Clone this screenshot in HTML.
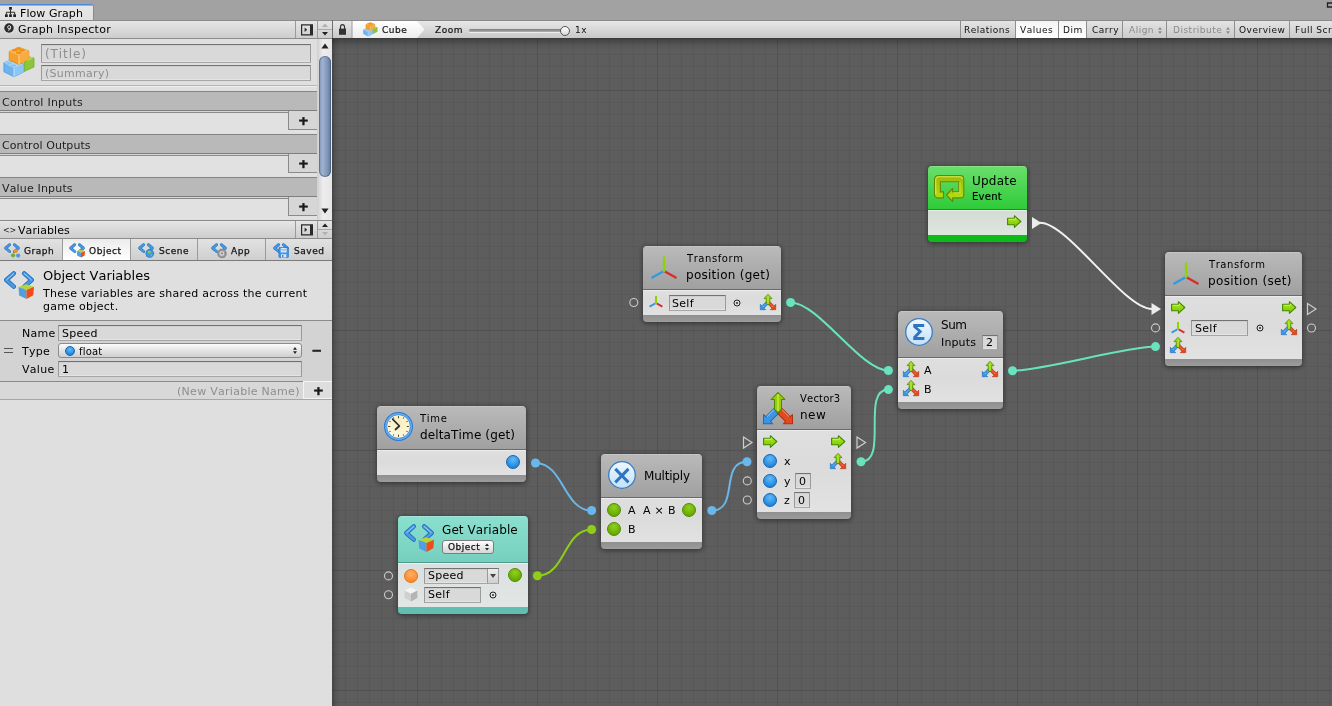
<!DOCTYPE html>
<html><head><meta charset="utf-8"><title>Flow Graph</title>
<style>
html,body{margin:0;padding:0}
body{width:1332px;height:706px;position:relative;overflow:hidden;background:#a2a2a2;font-family:"DejaVu Sans","Liberation Sans",sans-serif;font-size:11px;font-kerning:none}
.a{position:absolute}
.t{position:absolute;white-space:nowrap;line-height:14px;height:14px;will-change:transform}
.i{position:absolute;display:block;overflow:visible}
.g{will-change:transform}
.fld{position:absolute;box-sizing:border-box;background:#d9d9d9;border:1px solid #9a9a9a;border-top-color:#727272;border-bottom-color:#a6a6a6;box-shadow:inset 0 1px 0 #cecece,inset 0 -1px 0 #e4e4e4}
.hdr{position:absolute;background:linear-gradient(#e6e6e6,#cdcdcd);}
.node{position:absolute;border-radius:4px;box-shadow:0 1px 4px 1px rgba(0,0,0,.38);overflow:hidden}
.node .hd{position:absolute;left:0;right:0;top:0;box-sizing:border-box;border-bottom:1px solid #6a6a6a;background:linear-gradient(#bababa,#a0a0a0);box-shadow:inset 0 1px 0 rgba(255,255,255,.18)}
.node .bd{position:absolute;left:0;right:0;background:linear-gradient(#dfdfdf,#dbdbdb 45%,#e2e2e2);box-shadow:inset 0 1px 0 #ececec}
.node .ft{position:absolute;left:0;right:0;bottom:0;height:7px;background:linear-gradient(#8f8f8f,#9c9c9c)}
.node.green .hd{background:linear-gradient(#6ae06a,#2fca3a);border-bottom-color:#159020}
.node.green .bd{background:linear-gradient(#d3dbd3,#dfe6df);box-shadow:inset 0 1px 0 #e6efe6}
.node.green .ft{background:#0cba18}
.node.teal .hd{background:linear-gradient(#8be0ce,#76cfbe);border-bottom-color:#4e9c8e}
.node.teal .bd{background:linear-gradient(#dae0df,#e2e7e6);box-shadow:inset 0 1px 0 #eef4f3}
.node.teal .ft{background:#5fc0b1}
.btn{position:absolute;box-sizing:border-box;top:21px;height:17px;border-left:1px solid #8e8e8e;background:linear-gradient(#e4e4e4,#cacaca)}
.btn.on{background:linear-gradient(#f4f4f4,#ffffff)}
</style></head><body>

<div class="a" style="left:0;top:0;width:1332px;height:20px;background:#a2a2a2"></div>
<div class="a" style="left:0;top:4px;width:94px;height:17px;background:linear-gradient(#4a88dc 0,#4a88dc 1px,#8ab6ec 1px,#8ab6ec 2px,#e6e6e6 2px,#e1e1e1);border-right:1px solid #8a8a8a;border-radius:0 3px 0 0;box-sizing:border-box"></div>
<svg fill="none" class="i" style="left:5px;top:7px" width="11" height="10.5" viewBox="0 0 12 11" preserveAspectRatio="none"><path d="M4.5 0h3v3h-3z M0 7.5h3v3h-3z M4.5 7.5h3v3h-3z M9 7.5h3v3h-3z" fill="#222"/><path d="M6 3v4.5 M1.5 7.5v-2h9v2" stroke="#222" stroke-width="1"/></svg>
<span class="t" style="left:20.4px;top:7.00px;font-size:11px;letter-spacing:0.060px;color:#000;">Flow Graph</span>
<svg fill="none" class="i" style="left:1326px;top:2px" width="7" height="6" viewBox="0 0 7 6"><path d="M1.5 1 h6 v4 h-6z" stroke="#222" stroke-width="1.3"/></svg>
<div class="a" style="left:0;top:20px;width:332px;height:686px;background:#dfdfdf"></div>
<div class="a" style="left:0;top:20px;width:332px;height:1px;background:#8a8a8a"></div>
<div class="hdr" style="left:0;top:21px;width:332px;height:17px"></div>
<div class="a" style="left:0;top:38px;width:332px;height:1px;background:#8c8c8c"></div>
<svg fill="none" class="i" style="left:4px;top:23px" width="10" height="10" viewBox="0 0 11 11"><circle cx="5.5" cy="5.5" r="5.2" fill="#2a2a2a"/><circle cx="5.7" cy="4.6" r="1.7" stroke="#ddd" stroke-width="1.1"/><path d="M7.3 4.8 q0 3 -3 3.4" stroke="#ddd" stroke-width="1.1"/></svg>
<span class="t" style="left:18.4px;top:23.00px;font-size:11px;letter-spacing:0.303px;color:#000;">Graph Inspector</span>
<div class="a" style="left:295px;top:21px;width:1px;height:17px;background:#9a9a9a"></div><div class="a" style="left:317px;top:21px;width:1px;height:17px;background:#9a9a9a"></div><svg fill="none" class="i" style="left:301px;top:24px" width="12" height="12" viewBox="0 0 12 12"><path d="M.6 .8 h10.8 v10 h-10.8z" stroke="#2a2a2a" stroke-width="1.2"/><path d="M9 .8 h2.4 v10 h-2.4z" fill="#2a2a2a"/><path d="M3.6 3.6 L6.2 5.8 L3.6 8z" fill="#2a2a2a"/></svg>
<svg fill="none" class="i" style="left:321px;top:23px" width="8" height="14" viewBox="0 0 8 14"><path d="M4 .5 L7 4 L1 4Z" fill="#b0b0b0"/><path d="M1 9 L7 9 L4 12.5Z" fill="#222"/></svg>
<div class="a" style="left:318px;top:29px;width:14px;height:1px;background:#aaa"></div>
<svg fill="none" class="i" style="left:2.7px;top:46px" width="32.0" height="32.0" viewBox="3 46 32 32">
<path d="M24 60 L29 57 L34 58 L34 67 L24 71.6 Z" fill="#8ec63a" stroke="#6ea828" stroke-width=".7"/><path d="M24 60 L29 56.2 L34 57.8 L28 61 Z" fill="#a6d95a"/>
<path d="M3.9 62.8 L8.7 60.9 L23.7 64 L23.7 72 L14 76.8 L3.9 71.8 Z" fill="#6db3ee" stroke="#4a94dc" stroke-width=".7"/>
<path d="M3.9 62.8 L8.7 60.9 L23.7 64.5 L14 68.3 Z" fill="#a8d4f7"/>
<path d="M14 68.3 L23.7 64.5 L23.7 72 L14 76.8 Z" fill="#8cc6f4"/>
<path d="M14 68.3 L14 76.8" stroke="#d8ecfb" stroke-width=".8"/>
<path d="M9.2 51.5 L18.7 47.2 L28.8 50.9 L28.8 58.7 L19 64.6 L9.2 60 Z" fill="#f5a02c" stroke="#dc861a" stroke-width=".7"/>
<path d="M9.2 51.5 L18.7 47.2 L28.8 50.9 L19 55.6 Z" fill="#f9bb5e"/>
<path d="M19 55.6 L28.8 50.9 L28.8 58.7 L19 64.6 Z" fill="#f7ab40"/>
<path d="M19 55.6 L19 64.6" stroke="#fde0ae" stroke-width=".8"/>
<ellipse cx="15" cy="50.2" rx="3" ry="1.3" fill="#ef8f12"/><ellipse cx="22" cy="50.2" rx="3" ry="1.3" fill="#ef8f12"/><ellipse cx="18.8" cy="52.8" rx="3" ry="1.3" fill="#ef8f12"/><ellipse cx="18.6" cy="48.6" rx="2.6" ry="1.1" fill="#ef8f12"/>
<ellipse cx="9" cy="63.5" rx="2.6" ry="1.1" fill="#84bff0"/><ellipse cx="13.5" cy="65.5" rx="2.6" ry="1.1" fill="#84bff0"/>
</svg>
<div class="fld" style="left:41px;top:44px;width:270px;height:19px"></div>
<span class="t" style="left:44.5px;top:47.00px;font-size:12px;letter-spacing:0.9px;color:#8e8e8e;">(Title)</span>
<div class="fld" style="left:41px;top:65px;width:270px;height:16px"></div><span class="t" style="left:44.5px;top:67.00px;font-size:11px;letter-spacing:0.28px;color:#8e8e8e;">(Summary)</span>
<div class="a" style="left:0;top:85px;width:317px;height:1px;background:#b4b4b4"></div><div class="a" style="left:0;top:86px;width:317px;height:1px;background:#eee"></div>
<div class="a" style="left:0;top:91px;width:317px;height:1px;background:#858585"></div>
<div class="a" style="left:0;top:92px;width:317px;height:18px;background:#b9b9b9"></div>
<div class="a" style="left:0;top:110px;width:317px;height:1px;background:#7e7e7e"></div>
<div class="a" style="left:0;top:111px;width:317px;height:1px;background:#d6d6d6"></div>
<div class="a" style="left:0;top:112px;width:288px;height:1px;background:#8a8a8a"></div>
<div class="a" style="left:0;top:113px;width:317px;height:20px;background:#e1e1e1"></div>
<div class="a" style="left:288px;top:111px;width:29px;height:19px;box-sizing:border-box;background:#d6d6d6;border-left:1px solid #8a8a8a;border-bottom:1px solid #8a8a8a"></div>
<svg fill="none" class="i g" style="left:298.5px;top:116px" width="9" height="9" viewBox="0 0 9 9"><text x="-1.1" y="8.9" font-family="DejaVu Sans, sans-serif" font-weight="bold" font-size="13" fill="#1a1a1a" stroke="#1a1a1a" stroke-width=".55">+</text></svg>
<span class="t" style="left:1.5px;top:96.00px;font-size:11px;letter-spacing:0.237px;color:#222;">Control Inputs</span>
<div class="a" style="left:0;top:134px;width:317px;height:1px;background:#858585"></div>
<div class="a" style="left:0;top:135px;width:317px;height:18px;background:#b9b9b9"></div>
<div class="a" style="left:0;top:153px;width:317px;height:1px;background:#7e7e7e"></div>
<div class="a" style="left:0;top:154px;width:317px;height:1px;background:#d6d6d6"></div>
<div class="a" style="left:0;top:155px;width:288px;height:1px;background:#8a8a8a"></div>
<div class="a" style="left:0;top:156px;width:317px;height:20px;background:#e1e1e1"></div>
<div class="a" style="left:288px;top:154px;width:29px;height:19px;box-sizing:border-box;background:#d6d6d6;border-left:1px solid #8a8a8a;border-bottom:1px solid #8a8a8a"></div>
<svg fill="none" class="i g" style="left:298.5px;top:159px" width="9" height="9" viewBox="0 0 9 9"><text x="-1.1" y="8.9" font-family="DejaVu Sans, sans-serif" font-weight="bold" font-size="13" fill="#1a1a1a" stroke="#1a1a1a" stroke-width=".55">+</text></svg>
<span class="t" style="left:1.5px;top:139.00px;font-size:11px;letter-spacing:0.082px;color:#222;">Control Outputs</span>
<div class="a" style="left:0;top:177px;width:317px;height:1px;background:#858585"></div>
<div class="a" style="left:0;top:178px;width:317px;height:18px;background:#b9b9b9"></div>
<div class="a" style="left:0;top:196px;width:317px;height:1px;background:#7e7e7e"></div>
<div class="a" style="left:0;top:197px;width:317px;height:1px;background:#d6d6d6"></div>
<div class="a" style="left:0;top:198px;width:288px;height:1px;background:#8a8a8a"></div>
<div class="a" style="left:0;top:199px;width:317px;height:20px;background:#e1e1e1"></div>
<div class="a" style="left:288px;top:197px;width:29px;height:19px;box-sizing:border-box;background:#d6d6d6;border-left:1px solid #8a8a8a;border-bottom:1px solid #8a8a8a"></div>
<svg fill="none" class="i g" style="left:298.5px;top:202px" width="9" height="9" viewBox="0 0 9 9"><text x="-1.1" y="8.9" font-family="DejaVu Sans, sans-serif" font-weight="bold" font-size="13" fill="#1a1a1a" stroke="#1a1a1a" stroke-width=".55">+</text></svg>
<span class="t" style="left:1.5px;top:182.00px;font-size:11px;letter-spacing:0.165px;color:#222;">Value Inputs</span>
<div class="a" style="left:317px;top:39px;width:15px;height:182px;background:linear-gradient(90deg,#cfcfcf,#ededed 40%,#e6e6e6)"></div>
<svg fill="none" class="i" style="left:321px;top:43px" width="8" height="6" viewBox="0 0 8 6"><path d="M4 .5 L7.6 5.5 L.4 5.5Z" fill="#222"/></svg>
<svg fill="none" class="i" style="left:321px;top:208px" width="8" height="6" viewBox="0 0 8 6"><path d="M.4 .5 L7.6 .5 L4 5.5Z" fill="#222"/></svg>
<div class="a" style="left:318.6px;top:56px;width:12px;height:121px;border-radius:6px;background:linear-gradient(90deg,#7f95b6,#9fb2cf 30%,#8096b8 70%,#5f769b);box-shadow:inset 0 0 0 1px rgba(60,80,110,.5)"></div>
<div class="a" style="left:0;top:220px;width:332px;height:1px;background:#8a8a8a"></div>
<div class="hdr" style="left:0;top:221px;width:332px;height:17px"></div>
<div class="a" style="left:0;top:238px;width:332px;height:1px;background:#8c8c8c"></div>
<span class="t" style="left:2.5px;top:224.00px;font-size:8px;letter-spacing:-0.3px;color:#222;">&lt;&gt;</span>
<span class="t" style="left:18.4px;top:224.00px;font-size:11px;letter-spacing:0.084px;color:#000;">Variables</span>
<div class="a" style="left:295px;top:221px;width:1px;height:17px;background:#9a9a9a"></div><div class="a" style="left:317px;top:221px;width:1px;height:17px;background:#9a9a9a"></div><svg fill="none" class="i" style="left:301px;top:224px" width="12" height="12" viewBox="0 0 12 12"><path d="M.6 .8 h10.8 v10 h-10.8z" stroke="#2a2a2a" stroke-width="1.2"/><path d="M9 .8 h2.4 v10 h-2.4z" fill="#2a2a2a"/><path d="M3.6 3.6 L6.2 5.8 L3.6 8z" fill="#2a2a2a"/></svg>
<svg fill="none" class="i" style="left:321px;top:223px" width="8" height="14" viewBox="0 0 8 14"><path d="M4 .5 L7 4 L1 4Z" fill="#222"/><path d="M1 9 L7 9 L4 12.5Z" fill="#b0b0b0"/></svg>
<div class="a" style="left:318px;top:229px;width:14px;height:1px;background:#aaa"></div>
<div class="a" style="left:0;top:239px;width:332px;height:21px;background:linear-gradient(#e2e2e2,#cfcfcf)"></div>
<div class="a" style="left:62px;top:239px;width:68px;height:21px;background:linear-gradient(#ececec,#ffffff)"></div>
<div class="a" style="left:62px;top:239px;width:1px;height:21px;background:#9a9a9a"></div>
<div class="a" style="left:130px;top:239px;width:1px;height:21px;background:#9a9a9a"></div>
<div class="a" style="left:197px;top:239px;width:1px;height:21px;background:#9a9a9a"></div>
<div class="a" style="left:265px;top:239px;width:1px;height:21px;background:#9a9a9a"></div>
<div class="a" style="left:0;top:260px;width:332px;height:1px;background:#7a7a7a"></div>
<svg fill="none" class="i" style="left:4px;top:241.5px" width="16" height="16" viewBox="0 0 30 30" stroke-linejoin="round" stroke-linecap="round" fill="none">
<path d="M10.6 5 L3 11.4 L10.6 17.8" stroke="#1f6ab8" stroke-width="5.2"/><path d="M10.6 5 L3 11.4 L10.6 17.8" stroke="#4a9be6" stroke-width="3.4"/>
<path d="M19.4 5 L27 11.4 L19.4 17.8" stroke="#1f6ab8" stroke-width="5.2"/><path d="M19.4 5 L27 11.4 L19.4 17.8" stroke="#4a9be6" stroke-width="3.4"/>
<circle cx="22" cy="17" r="4" fill="#f0902a"/><circle cx="17" cy="25" r="4" fill="#6cb23a"/><circle cx="26.5" cy="25.5" r="4" fill="#4a9be6"/></svg>
<span class="t" style="left:23.7px;top:244.00px;font-size:9px;letter-spacing:0.55px;color:#111;-webkit-text-stroke:.25px #111;">Graph</span>
<svg fill="none" class="i" style="left:69px;top:241.5px" width="16" height="16" viewBox="0 0 30 30" stroke-linejoin="round" stroke-linecap="round" fill="none">
<path d="M10.6 5 L3 11.4 L10.6 17.8" stroke="#1f6ab8" stroke-width="5.2"/><path d="M10.6 5 L3 11.4 L10.6 17.8" stroke="#4a9be6" stroke-width="3.4"/>
<path d="M19.4 5 L27 11.4 L19.4 17.8" stroke="#1f6ab8" stroke-width="5.2"/><path d="M19.4 5 L27 11.4 L19.4 17.8" stroke="#4a9be6" stroke-width="3.4"/>
<path d="M14.5 17 L22 14.3 L30 16.8 L22.5 20 Z" fill="#b5d43a"/><path d="M14.5 17 L22.5 20 L22.5 29 L15.2 25.5 Z" fill="#4f9fe2"/><path d="M22.5 20 L30 16.8 L29.3 25.3 L22.5 29 Z" fill="#ee4d18"/></svg>
<span class="t" style="left:88.8px;top:244.00px;font-size:9px;letter-spacing:0.55px;color:#111;-webkit-text-stroke:.25px #111;">Object</span>
<svg fill="none" class="i" style="left:138px;top:241.5px" width="16" height="16" viewBox="0 0 30 30" stroke-linejoin="round" stroke-linecap="round" fill="none">
<path d="M10.6 5 L3 11.4 L10.6 17.8" stroke="#1f6ab8" stroke-width="5.2"/><path d="M10.6 5 L3 11.4 L10.6 17.8" stroke="#4a9be6" stroke-width="3.4"/>
<path d="M19.4 5 L27 11.4 L19.4 17.8" stroke="#1f6ab8" stroke-width="5.2"/><path d="M19.4 5 L27 11.4 L19.4 17.8" stroke="#4a9be6" stroke-width="3.4"/>
<circle cx="22" cy="21.5" r="7.5" fill="#3f97e6" stroke="#1f6ab8" stroke-width="1"/><path d="M18 18 q3 -3 6 -1 q1 3 -2 5 q-3 1 -4 -4z M24 24 q2 -1 3 1 q-1 2 -3 2z" fill="#7fcf3a"/></svg>
<span class="t" style="left:158.6px;top:244.00px;font-size:9px;letter-spacing:0.55px;color:#111;-webkit-text-stroke:.25px #111;">Scene</span>
<svg fill="none" class="i" style="left:211px;top:241.5px" width="16" height="16" viewBox="0 0 30 30" stroke-linejoin="round" stroke-linecap="round" fill="none">
<path d="M10.6 5 L3 11.4 L10.6 17.8" stroke="#1f6ab8" stroke-width="5.2"/><path d="M10.6 5 L3 11.4 L10.6 17.8" stroke="#4a9be6" stroke-width="3.4"/>
<path d="M19.4 5 L27 11.4 L19.4 17.8" stroke="#1f6ab8" stroke-width="5.2"/><path d="M19.4 5 L27 11.4 L19.4 17.8" stroke="#4a9be6" stroke-width="3.4"/>
<circle cx="20.6" cy="21.5" r="7" fill="none" stroke="#8e8e8e" stroke-width="4" stroke-dasharray="3 2.5"/><circle cx="20.6" cy="21.5" r="5.6" fill="#d4d4d4" stroke="#868686" stroke-width="1.2"/><circle cx="20.6" cy="21.5" r="2.1" fill="#8c8c8c"/></svg>
<span class="t" style="left:231px;top:244.00px;font-size:9px;letter-spacing:0.55px;color:#111;-webkit-text-stroke:.25px #111;">App</span>
<svg fill="none" class="i" style="left:273px;top:241.5px" width="16" height="16" viewBox="0 0 30 30" stroke-linejoin="round" stroke-linecap="round" fill="none">
<path d="M10.6 5 L3 11.4 L10.6 17.8" stroke="#1f6ab8" stroke-width="5.2"/><path d="M10.6 5 L3 11.4 L10.6 17.8" stroke="#4a9be6" stroke-width="3.4"/>
<path d="M19.4 5 L27 11.4 L19.4 17.8" stroke="#1f6ab8" stroke-width="5.2"/><path d="M19.4 5 L27 11.4 L19.4 17.8" stroke="#4a9be6" stroke-width="3.4"/>
<rect x="11" y="10.5" width="18" height="18.5" rx="1.5" fill="#3f97e6" stroke="#1f6ab8" stroke-width="1"/><rect x="14.5" y="11.5" width="11" height="8" fill="#eef5fc"/><path d="M16 14 h8 M16 16.5 h8" stroke="#6aa6dc" stroke-width="1.2"/><rect x="15" y="23" width="10" height="6" fill="#dbe6f0"/><rect x="17" y="24.5" width="2.5" height="3.5" fill="#3f6fa8"/></svg>
<span class="t" style="left:293.5px;top:244.00px;font-size:9px;letter-spacing:0.55px;color:#111;-webkit-text-stroke:.25px #111;">Saved</span>
<svg fill="none" class="i" style="left:4px;top:270px" width="30" height="30" viewBox="0 0 30 30" stroke-linejoin="round" stroke-linecap="round" fill="none">
<path d="M9.8 3.4 L2.3 10 L9.8 16.6" stroke="#1f6ab8" stroke-width="4.4"/><path d="M9.8 3.4 L2.3 10 L9.8 16.6" stroke="#4a9be6" stroke-width="2.8"/><path d="M9.6 3.6 L2.8 9.6" stroke="#a8d6fa" stroke-width="1" opacity=".9"/>
<path d="M20.2 3.4 L27.7 10 L20.2 16.6" stroke="#1f6ab8" stroke-width="4.4"/><path d="M20.2 3.4 L27.7 10 L20.2 16.6" stroke="#4a9be6" stroke-width="2.8"/><path d="M20.4 3.6 L27.2 9.6" stroke="#a8d6fa" stroke-width="1" opacity=".9"/>
<path d="M14.5 17 L22 14.3 L30 16.8 L22.5 20 Z" fill="#b5d43a"/><path d="M14.5 17 L22.5 20 L22.5 29 L15.2 25.5 Z" fill="#4f9fe2"/><path d="M22.5 20 L30 16.8 L29.3 25.3 L22.5 29 Z" fill="#ee4d18"/></svg>
<span class="t" style="left:43.3px;top:269.00px;font-size:13px;letter-spacing:0.007px;color:#000;">Object Variables</span>
<span class="t" style="left:43.3px;top:287.00px;font-size:11px;letter-spacing:0.239px;color:#000;">These variables are shared across the current</span>
<span class="t" style="left:43.3px;top:300.00px;font-size:11px;letter-spacing:0.28px;color:#000;">game object.</span>
<div class="a" style="left:0;top:320px;width:332px;height:1px;background:#8a8a8a"></div>
<div class="a" style="left:0;top:321px;width:332px;height:60px;background:#d3d3d3"></div>
<div class="a" style="left:0;top:381px;width:332px;height:1px;background:#8a8a8a"></div>
<div class="a" style="left:0;top:382px;width:332px;height:17px;background:#d8d8d8"></div>
<div class="a" style="left:0;top:399px;width:332px;height:1px;background:#a6a6a6"></div>
<div class="a" style="left:4px;top:348px;width:9px;height:1px;background:#555"></div><div class="a" style="left:4px;top:352px;width:9px;height:1px;background:#555"></div>
<span class="t" style="left:22.4px;top:327.00px;font-size:11px;letter-spacing:0.28px;color:#000;">Name</span>
<span class="t" style="left:22.4px;top:345.00px;font-size:11px;letter-spacing:0.28px;color:#000;">Type</span>
<span class="t" style="left:22.4px;top:363.00px;font-size:11px;letter-spacing:0.28px;color:#000;">Value</span>
<div class="fld" style="left:58px;top:325px;width:244px;height:16px"></div><span class="t" style="left:61.5px;top:327.00px;font-size:11px;letter-spacing:0.28px;color:#000;">Speed</span>
<div class="fld" style="left:58px;top:361px;width:244px;height:16px"></div><span class="t" style="left:61.5px;top:363.00px;font-size:11px;letter-spacing:0.28px;color:#000;">1</span>
<div class="a" style="left:58px;top:343px;width:244px;height:15px;box-sizing:border-box;border:1px solid #8c8c8c;border-radius:3px;background:linear-gradient(#fbfbfb,#dcdcdc 70%,#cfcfcf)"></div>
<div class="i" style="left:64.5px;top:345.5px;width:10px;height:10px;border-radius:50%;box-sizing:border-box;border:1px solid #1763b0;background:radial-gradient(circle at 50% 30%, #62bbf8 0%, #1f86dc 75%)"></div>
<span class="t" style="left:79px;top:345.00px;font-size:10px;letter-spacing:0.2px;color:#000;">float</span>
<svg fill="none" class="i" style="left:292.5px;top:347px" width="4" height="7" viewBox="0 0 5 9"><path d="M2.5 0 L5 3.4 L0 3.4Z M0 5.6 L5 5.6 L2.5 9Z" fill="#222"/></svg>
<svg fill="none" class="i g" style="left:313px;top:345.2px" width="8" height="10" viewBox="0 0 8 10"><text x="-1.6" y="9.6" font-family="DejaVu Sans, sans-serif" font-weight="bold" font-size="13" fill="#1a1a1a" stroke="#1a1a1a" stroke-width=".4">−</text></svg>
<span class="t" style="right:1032.5px;top:385.00px;font-size:11px;letter-spacing:0.28px;color:#8e8e8e;">(New Variable Name)</span>
<div class="a" style="left:303px;top:381px;width:29px;height:18px;box-sizing:border-box;background:#dedede;border-left:1px solid #f4f4f4;border-top:1px solid #f4f4f4;border-bottom:1px solid #f4f4f4"></div>
<svg fill="none" class="i g" style="left:314px;top:386px" width="9" height="9" viewBox="0 0 9 9"><text x="-1.1" y="8.9" font-family="DejaVu Sans, sans-serif" font-weight="bold" font-size="13" fill="#1a1a1a" stroke="#1a1a1a" stroke-width=".55">+</text></svg>
<div class="a" style="left:332px;top:38px;width:1000px;height:668px;background-color:#5d5d5d;background-image:
linear-gradient(90deg,rgba(0,0,0,.25) 0,rgba(0,0,0,.1) 3px,rgba(0,0,0,0) 8px),
linear-gradient(180deg,rgba(0,0,0,.36) 0,rgba(0,0,0,.2) 3px,rgba(0,0,0,.08) 7px,rgba(0,0,0,0) 12px),
linear-gradient(90deg,rgba(0,0,0,.07) 1px,transparent 1px),
linear-gradient(180deg,rgba(0,0,0,.07) 1px,transparent 1px),
linear-gradient(90deg,rgba(0,0,0,.06) 1px,transparent 1px),
linear-gradient(180deg,rgba(0,0,0,.06) 1px,transparent 1px);
background-size:100% 100%,100% 100%,120px 120px,120px 120px,12px 12px,12px 12px;
background-position:0 0,0 0,85px 52px,85px 52px,1px 4px,1px 4px;background-repeat:no-repeat,no-repeat,repeat,repeat,repeat,repeat"></div>
<div class="a" style="left:332px;top:20px;width:1000px;height:1px;background:#8a8a8a"></div>
<div class="hdr" style="left:332px;top:21px;width:1000px;height:17px;background:linear-gradient(#e8e8e8,#c8c8c8)"></div>
<div class="a" style="left:332px;top:20px;width:1px;height:18px;background:#6f6f6f"></div>
<svg fill="none" class="i" style="left:339px;top:24px" width="7" height="11" viewBox="0 0 8 11" preserveAspectRatio="none"><rect x="0" y="4.6" width="8" height="6.2" fill="#333"/><path d="M1.7 5 v-2 a2.3 2.3 0 0 1 4.6 0 v2" stroke="#333" stroke-width="1.3"/></svg>
<svg fill="none" class="i" style="left:352px;top:21px" width="73" height="17" viewBox="0 0 73 17"><defs><linearGradient id="bc" x1="0" y1="0" x2="0" y2="1"><stop offset="0" stop-color="#fff"/><stop offset="1" stop-color="#ececec"/></linearGradient></defs><path d="M0 0 L65 0 L72.5 8.5 L65 17 L0 17Z" fill="url(#bc)"/><path d="M0 0v17" stroke="#9a9a9a" stroke-width="1"/></svg>
<svg fill="none" class="i" style="left:363px;top:21.8px" width="14.72" height="14.72" viewBox="3 46 32 32">
<path d="M24 60 L29 57 L34 58 L34 67 L24 71.6 Z" fill="#8ec63a" stroke="#6ea828" stroke-width=".7"/><path d="M24 60 L29 56.2 L34 57.8 L28 61 Z" fill="#a6d95a"/>
<path d="M3.9 62.8 L8.7 60.9 L23.7 64 L23.7 72 L14 76.8 L3.9 71.8 Z" fill="#6db3ee" stroke="#4a94dc" stroke-width=".7"/>
<path d="M3.9 62.8 L8.7 60.9 L23.7 64.5 L14 68.3 Z" fill="#a8d4f7"/>
<path d="M14 68.3 L23.7 64.5 L23.7 72 L14 76.8 Z" fill="#8cc6f4"/>
<path d="M14 68.3 L14 76.8" stroke="#d8ecfb" stroke-width=".8"/>
<path d="M9.2 51.5 L18.7 47.2 L28.8 50.9 L28.8 58.7 L19 64.6 L9.2 60 Z" fill="#f5a02c" stroke="#dc861a" stroke-width=".7"/>
<path d="M9.2 51.5 L18.7 47.2 L28.8 50.9 L19 55.6 Z" fill="#f9bb5e"/>
<path d="M19 55.6 L28.8 50.9 L28.8 58.7 L19 64.6 Z" fill="#f7ab40"/>
<path d="M19 55.6 L19 64.6" stroke="#fde0ae" stroke-width=".8"/>
<ellipse cx="15" cy="50.2" rx="3" ry="1.3" fill="#ef8f12"/><ellipse cx="22" cy="50.2" rx="3" ry="1.3" fill="#ef8f12"/><ellipse cx="18.8" cy="52.8" rx="3" ry="1.3" fill="#ef8f12"/><ellipse cx="18.6" cy="48.6" rx="2.6" ry="1.1" fill="#ef8f12"/>
<ellipse cx="9" cy="63.5" rx="2.6" ry="1.1" fill="#84bff0"/><ellipse cx="13.5" cy="65.5" rx="2.6" ry="1.1" fill="#84bff0"/>
</svg>
<span class="t" style="left:381.7px;top:23.00px;font-size:9px;letter-spacing:0.5px;color:#111;-webkit-text-stroke:.2px #111;">Cube</span>
<span class="t" style="left:435.4px;top:23.00px;font-size:9px;letter-spacing:0.5px;color:#111;-webkit-text-stroke:.2px #111;">Zoom</span>
<div class="a" style="left:469px;top:29px;width:96px;height:3px;border-radius:2px;background:linear-gradient(#7c7c7c,#b0b0b0);box-shadow:0 1px 0 rgba(255,255,255,.6)"></div>
<div class="a" style="left:559.7px;top:25.5px;width:10px;height:10px;border-radius:50%;box-sizing:border-box;border:1px solid #555;background:linear-gradient(#fff,#d8d8d8)"></div>
<span class="t" style="left:575.3px;top:23.00px;font-size:9px;letter-spacing:0.5px;color:#111;">1x</span>
<div class="btn" style="left:960px;width:55px"></div>
<span class="t" style="left:964.3px;top:23.00px;font-size:9px;letter-spacing:0.5px;color:#111;">Relations</span>
<div class="btn on" style="left:1015px;width:43px"></div>
<span class="t" style="left:1019.5px;top:23.00px;font-size:9px;letter-spacing:0.5px;color:#111;">Values</span>
<div class="btn on" style="left:1058px;width:28px"></div>
<span class="t" style="left:1063px;top:23.00px;font-size:9px;letter-spacing:0.5px;color:#111;">Dim</span>
<div class="btn" style="left:1086px;width:36px"></div>
<span class="t" style="left:1091.5px;top:23.00px;font-size:9px;letter-spacing:0.5px;color:#111;">Carry</span>
<div class="btn" style="left:1122px;width:44px"></div>
<span class="t" style="left:1128.5px;top:23.00px;font-size:9px;letter-spacing:0.5px;color:#8a8a8a;">Align</span>
<div class="btn" style="left:1166px;width:68px"></div>
<span class="t" style="left:1172.5px;top:23.00px;font-size:9px;letter-spacing:0.5px;color:#8a8a8a;">Distribute</span>
<div class="btn" style="left:1234px;width:55px"></div>
<span class="t" style="left:1238.7px;top:23.00px;font-size:9px;letter-spacing:0.5px;color:#111;">Overview</span>
<div class="btn" style="left:1289px;width:51px"></div>
<span class="t" style="left:1294.8px;top:23.00px;font-size:9px;letter-spacing:0.5px;color:#111;">Full Screen</span>
<svg fill="none" class="i" style="left:1158.1px;top:26.5px" width="4" height="7" viewBox="0 0 5 9"><path d="M2.5 0 L5 3.4 L0 3.4Z M0 5.6 L5 5.6 L2.5 9Z" fill="#8a8a8a"/></svg>
<svg fill="none" class="i" style="left:1226.3px;top:26.5px" width="4" height="7" viewBox="0 0 5 9"><path d="M2.5 0 L5 3.4 L0 3.4Z M0 5.6 L5 5.6 L2.5 9Z" fill="#8a8a8a"/></svg>
<div class="a" style="left:332px;top:38px;width:1000px;height:1px;background:#3c3c3c"></div>
<svg fill="none" class="i" style="left:0;top:0" width="1332" height="706" viewBox="0 0 1332 706"><path d="M535.5 463 C563.5 463 563.6 510.5 591.6 510.5" fill="none" stroke="#6ab7ec" stroke-width="2"/><path d="M537.4 575.8 C565.4 575.8 563.6 529.5 591.6 529.5" fill="none" stroke="#8fce16" stroke-width="2"/><path d="M711.8 510.5 C739.8 510.5 719 461.8 747 461.8" fill="none" stroke="#6ab7ec" stroke-width="2"/><path d="M861 461.8 C889 461.8 860.4 389.6 888.4 389.6" fill="none" stroke="#68e3bd" stroke-width="2"/><path d="M790.6 302.5 C818.6 302.5 860.4 370.5 888.4 370.5" fill="none" stroke="#68e3bd" stroke-width="2"/><path d="M1012.5 370.7 C1041.5033170516754 370.7 1126.4966829483246 346.6 1155.5 346.6" fill="none" stroke="#68e3bd" stroke-width="2"/><path d="M1040 222.8 C1068.266191819911 222.8 1123.733808180089 309 1152 309" fill="none" stroke="#f2f2f2" stroke-width="2"/><circle cx="535.5" cy="463" r="4.5" fill="#6ab7ec"/><circle cx="591.6" cy="510.5" r="4.5" fill="#6ab7ec"/><circle cx="537.4" cy="575.8" r="4.5" fill="#8fce16"/><circle cx="591.6" cy="529.5" r="4.5" fill="#8fce16"/><circle cx="711.8" cy="510.5" r="4.5" fill="#6ab7ec"/><circle cx="747" cy="461.8" r="4.5" fill="#6ab7ec"/><circle cx="861" cy="461.8" r="4.5" fill="#68e3bd"/><circle cx="888.4" cy="389.6" r="4.5" fill="#68e3bd"/><circle cx="790.6" cy="302.5" r="4.5" fill="#68e3bd"/><circle cx="888.4" cy="370.5" r="4.5" fill="#68e3bd"/><circle cx="1012.5" cy="370.7" r="4.5" fill="#68e3bd"/><circle cx="1155.5" cy="346.6" r="4.5" fill="#68e3bd"/><circle cx="633.8" cy="302.5" r="4" fill="none" stroke="#cbcbcb" stroke-width="1.1"/><circle cx="388.5" cy="575.9" r="4" fill="none" stroke="#cbcbcb" stroke-width="1.1"/><circle cx="388.5" cy="594.8" r="4" fill="none" stroke="#cbcbcb" stroke-width="1.1"/><circle cx="747.3" cy="480.9" r="4" fill="none" stroke="#cbcbcb" stroke-width="1.1"/><circle cx="747.3" cy="500" r="4" fill="none" stroke="#cbcbcb" stroke-width="1.1"/><circle cx="1155.5" cy="327.9" r="4" fill="none" stroke="#cbcbcb" stroke-width="1.1"/><circle cx="1311.5" cy="328" r="4" fill="none" stroke="#cbcbcb" stroke-width="1.1"/><path d="M1032 217 L1041.5 223 L1032 229 Z" fill="#ececec"/><path d="M1151.5 303 L1161.0 309 L1151.5 315 Z" fill="#ececec"/><path d="M743.5 437.1 L752 442.6 L743.5 448.1 Z" fill="none" stroke="#cdcdcd" stroke-width="1.2"/><path d="M857.0 437.1 L865.5 442.6 L857.0 448.1 Z" fill="none" stroke="#cdcdcd" stroke-width="1.2"/><path d="M1307.5 303.5 L1316 309 L1307.5 314.5 Z" fill="none" stroke="#cdcdcd" stroke-width="1.2"/></svg>
<div class="node grey" style="left:643px;top:246px;width:138px;height:76px"><div class="hd" style="height:44px"></div><div class="bd" style="top:44px;height:25px"></div><div class="ft"></div></div>
<svg fill="none" class="i" style="left:647.8px;top:252.60000000000002px" width="32" height="32" viewBox="0 0 32 32" stroke-linecap="butt">
<path d="M16 18 L3.5 25.0" stroke="#2f9be0" stroke-width="2.3"/>
<path d="M16 18 L28.5 25.0" stroke="#dc2a2a" stroke-width="2.3"/>
<path d="M16 19.15 L16 3.5" stroke="#8fd400" stroke-width="2.3"/>
</svg>
<span class="t" style="left:686.6px;top:252.00px;font-size:10px;letter-spacing:0.564px;color:#000;">Transform</span>
<span class="t" style="left:686.4px;top:268.00px;font-size:12px;letter-spacing:0.268px;color:#000;">position (get)</span>
<svg fill="none" class="i" style="left:640px;top:285px" width="32" height="32" viewBox="0 0 32 32" stroke-linecap="butt">
<path d="M16 18 L9.6 21.7" stroke="#2f9be0" stroke-width="2.0"/>
<path d="M16 18 L22.4 21.7" stroke="#dc2a2a" stroke-width="2.0"/>
<path d="M16 19.00 L16 11.1" stroke="#8fd400" stroke-width="2.0"/>
</svg>
<div class="fld" style="left:668.5px;top:295px;width:57px;height:16px"></div><span class="t" style="left:672.0px;top:297.00px;font-size:11px;letter-spacing:0.28px;color:#000;">Self</span>
<svg fill="none" class="i" style="left:732px;top:297.5px" width="10" height="10" viewBox="0 0 10 10"><circle cx="5" cy="5" r="3" fill="none" stroke="#222" stroke-width="1"/><circle cx="5" cy="5" r="0.9" fill="#222"/></svg>
<svg fill="none" class="i" style="left:760px;top:293.5px" width="16" height="16" viewBox="0 0 16 16" stroke-linejoin="round">
<path d="M7.4 6.4 L1.87 11.87 L0.3 10.3 L0.3 15.7 L5.7 15.7 L4.13 14.13 L9.6 8.6 Z" fill="#3a95e4" stroke="#1c6ab8" stroke-width=".6"/>
<path d="M8.6 6.4 L14.13 11.87 L15.7 10.3 L15.7 15.7 L10.3 15.7 L11.87 14.13 L6.4 8.6 Z" fill="#e2491e" stroke="#b03010" stroke-width=".6"/>
<path d="M6.6 9.2 L2.6 13.2" stroke="#b5dcfa" stroke-width=".8" stroke-dasharray="1 1"/><path d="M9.4 9.2 L13.4 13.2" stroke="#f7b9a4" stroke-width=".8" stroke-dasharray="1 1"/>
<path d="M8 0.3 L12 4.6 L9.8 4.6 L9.8 9.2 L8 11 L6.2 9.2 L6.2 4.6 L4 4.6 Z" fill="#93cc08" stroke="#3f8a00" stroke-width=".7"/>
<path d="M8 1.6 L8 9.6" stroke="#c9ee55" stroke-width="1.1" opacity=".9"/>
</svg>
<div class="node green" style="left:928px;top:166px;width:99px;height:76px"><div class="hd" style="height:44px"></div><div class="bd" style="top:44px;height:25px"></div><div class="ft"></div></div>
<svg fill="none" class="i" style="left:934px;top:175px" width="30.4" height="27" viewBox="-0.5 -0.5 31 27" preserveAspectRatio="none" stroke-linejoin="round">
<defs><linearGradient id="upg" x1="0" y1="0" x2="0" y2="1"><stop offset="0" stop-color="#9cb804"/><stop offset=".45" stop-color="#a8cc0a"/><stop offset="1" stop-color="#b2e412"/></linearGradient></defs>
<path d="M3.5 0 H26.4 a3.5 3.5 0 0 1 3.5 3.5 V18.9 a3.5 3.5 0 0 1 -3.5 3.5 H18.5 V26 L12.3 19.5 L18.5 13 V16.4 H24.8 V6.2 H6 V16.4 H9.2 V22.4 H3.5 a3.5 3.5 0 0 1 -3.5 -3.5 V3.5 a3.5 3.5 0 0 1 3.5 -3.5 Z" fill="url(#upg)" stroke="#6a8600" stroke-width="1.1"/>
<path d="M1.3 18.5 V3.8 a2.5 2.5 0 0 1 2.5 -2.5 H26 a2.6 2.6 0 0 1 2.6 2.6" stroke="#dff06a" stroke-width="1" opacity=".9"/>
<path d="M25.9 6.6 V17.3 H19.3" stroke="#dff06a" stroke-width="1" opacity=".7"/>
</svg>
<span class="t" style="left:971.6px;top:174.00px;font-size:12px;letter-spacing:0.226px;color:#000;">Update</span>
<span class="t" style="left:971.6px;top:190.00px;font-size:10px;letter-spacing:0.261px;color:#000;-webkit-text-stroke:.2px #000;">Event</span>
<svg fill="none" class="i" style="left:1007px;top:215px" width="14.4" height="13" viewBox="0 0 14.4 13">
<defs><linearGradient id="fg1" x1="0" y1="0" x2="0" y2="1"><stop offset="0" stop-color="#b2ea26"/><stop offset="1" stop-color="#7cc400"/></linearGradient></defs>
<path d="M0.6 3.2 L7.4 3.2 L7.4 0.7 L13.8 6.5 L7.4 12.3 L7.4 9.8 L0.6 9.8 Z" fill="url(#fg1)" stroke="#3f8a00" stroke-width="1.1" stroke-linejoin="round"/>
<path d="M1.6 4.3 L8.3 4.3 L8.3 2.8" stroke="#dcf47a" stroke-width="0.9" opacity=".85"/>
</svg>
<div class="node grey" style="left:1165px;top:252px;width:137px;height:114px"><div class="hd" style="height:44px"></div><div class="bd" style="top:44px;height:63px"></div><div class="ft"></div></div>
<svg fill="none" class="i" style="left:1170px;top:259.2px" width="32" height="32" viewBox="0 0 32 32" stroke-linecap="butt">
<path d="M16 18 L3.5 25.0" stroke="#2f9be0" stroke-width="2.3"/>
<path d="M16 18 L28.5 25.0" stroke="#dc2a2a" stroke-width="2.3"/>
<path d="M16 19.15 L16 3.5" stroke="#8fd400" stroke-width="2.3"/>
</svg>
<span class="t" style="left:1208.6px;top:258.00px;font-size:10px;letter-spacing:0.564px;color:#000;">Transform</span>
<span class="t" style="left:1208.4px;top:274.00px;font-size:12px;letter-spacing:0.341px;color:#000;">position (set)</span>
<svg fill="none" class="i" style="left:1171px;top:301px" width="14.4" height="13" viewBox="0 0 14.4 13">
<defs><linearGradient id="fg2" x1="0" y1="0" x2="0" y2="1"><stop offset="0" stop-color="#b2ea26"/><stop offset="1" stop-color="#7cc400"/></linearGradient></defs>
<path d="M0.6 3.2 L7.4 3.2 L7.4 0.7 L13.8 6.5 L7.4 12.3 L7.4 9.8 L0.6 9.8 Z" fill="url(#fg2)" stroke="#3f8a00" stroke-width="1.1" stroke-linejoin="round"/>
<path d="M1.6 4.3 L8.3 4.3 L8.3 2.8" stroke="#dcf47a" stroke-width="0.9" opacity=".85"/>
</svg>
<svg fill="none" class="i" style="left:1282px;top:301px" width="14.4" height="13" viewBox="0 0 14.4 13">
<defs><linearGradient id="fg3" x1="0" y1="0" x2="0" y2="1"><stop offset="0" stop-color="#b2ea26"/><stop offset="1" stop-color="#7cc400"/></linearGradient></defs>
<path d="M0.6 3.2 L7.4 3.2 L7.4 0.7 L13.8 6.5 L7.4 12.3 L7.4 9.8 L0.6 9.8 Z" fill="url(#fg3)" stroke="#3f8a00" stroke-width="1.1" stroke-linejoin="round"/>
<path d="M1.6 4.3 L8.3 4.3 L8.3 2.8" stroke="#dcf47a" stroke-width="0.9" opacity=".85"/>
</svg>
<svg fill="none" class="i" style="left:1162px;top:310.9px" width="32" height="32" viewBox="0 0 32 32" stroke-linecap="butt">
<path d="M16 18 L9.6 21.7" stroke="#2f9be0" stroke-width="2.0"/>
<path d="M16 18 L22.4 21.7" stroke="#dc2a2a" stroke-width="2.0"/>
<path d="M16 19.00 L16 11.1" stroke="#8fd400" stroke-width="2.0"/>
</svg>
<div class="fld" style="left:1191px;top:320px;width:57px;height:16px"></div><span class="t" style="left:1194.5px;top:322.00px;font-size:11px;letter-spacing:0.28px;color:#000;">Self</span>
<svg fill="none" class="i" style="left:1254.5px;top:322.9px" width="10" height="10" viewBox="0 0 10 10"><circle cx="5" cy="5" r="3" fill="none" stroke="#222" stroke-width="1"/><circle cx="5" cy="5" r="0.9" fill="#222"/></svg>
<svg fill="none" class="i" style="left:1281px;top:318.5px" width="16" height="16" viewBox="0 0 16 16" stroke-linejoin="round">
<path d="M7.4 6.4 L1.87 11.87 L0.3 10.3 L0.3 15.7 L5.7 15.7 L4.13 14.13 L9.6 8.6 Z" fill="#3a95e4" stroke="#1c6ab8" stroke-width=".6"/>
<path d="M8.6 6.4 L14.13 11.87 L15.7 10.3 L15.7 15.7 L10.3 15.7 L11.87 14.13 L6.4 8.6 Z" fill="#e2491e" stroke="#b03010" stroke-width=".6"/>
<path d="M6.6 9.2 L2.6 13.2" stroke="#b5dcfa" stroke-width=".8" stroke-dasharray="1 1"/><path d="M9.4 9.2 L13.4 13.2" stroke="#f7b9a4" stroke-width=".8" stroke-dasharray="1 1"/>
<path d="M8 0.3 L12 4.6 L9.8 4.6 L9.8 9.2 L8 11 L6.2 9.2 L6.2 4.6 L4 4.6 Z" fill="#93cc08" stroke="#3f8a00" stroke-width=".7"/>
<path d="M8 1.6 L8 9.6" stroke="#c9ee55" stroke-width="1.1" opacity=".9"/>
</svg>
<svg fill="none" class="i" style="left:1169.8px;top:337px" width="16" height="16" viewBox="0 0 16 16" stroke-linejoin="round">
<path d="M7.4 6.4 L1.87 11.87 L0.3 10.3 L0.3 15.7 L5.7 15.7 L4.13 14.13 L9.6 8.6 Z" fill="#3a95e4" stroke="#1c6ab8" stroke-width=".6"/>
<path d="M8.6 6.4 L14.13 11.87 L15.7 10.3 L15.7 15.7 L10.3 15.7 L11.87 14.13 L6.4 8.6 Z" fill="#e2491e" stroke="#b03010" stroke-width=".6"/>
<path d="M6.6 9.2 L2.6 13.2" stroke="#b5dcfa" stroke-width=".8" stroke-dasharray="1 1"/><path d="M9.4 9.2 L13.4 13.2" stroke="#f7b9a4" stroke-width=".8" stroke-dasharray="1 1"/>
<path d="M8 0.3 L12 4.6 L9.8 4.6 L9.8 9.2 L8 11 L6.2 9.2 L6.2 4.6 L4 4.6 Z" fill="#93cc08" stroke="#3f8a00" stroke-width=".7"/>
<path d="M8 1.6 L8 9.6" stroke="#c9ee55" stroke-width="1.1" opacity=".9"/>
</svg>
<div class="node grey" style="left:898px;top:311px;width:105px;height:98px"><div class="hd" style="height:47px"></div><div class="bd" style="top:47px;height:44px"></div><div class="ft"></div></div>
<svg fill="none" class="i" style="left:905px;top:318px" width="28" height="28" viewBox="0 0 28 28">
<defs><linearGradient id="cg919" x1="0" y1="0" x2="0" y2="1"><stop offset="0" stop-color="#eef8ff"/><stop offset="1" stop-color="#c4e0f8"/></linearGradient></defs>
<circle cx="14" cy="14" r="13.3" fill="url(#cg919)" stroke="#3a7cc2" stroke-width="1.3"/><text x="6.3" y="21.9" font-family="DejaVu Sans, sans-serif" font-weight="bold" font-size="21.5" fill="#2f74c0">Σ</text></svg>
<span class="t" style="left:941.4px;top:318.00px;font-size:12px;letter-spacing:-0.461px;color:#000;">Sum</span>
<span class="t" style="left:941.4px;top:336.00px;font-size:11px;letter-spacing:0.136px;color:#000;">Inputs</span>
<div class="fld" style="left:982px;top:334.5px;width:15.5px;height:15px"></div><span class="t" style="left:985.5px;top:336.00px;font-size:11px;letter-spacing:0.28px;color:#000;">2</span>
<svg fill="none" class="i" style="left:902.8px;top:361px" width="16" height="16" viewBox="0 0 16 16" stroke-linejoin="round">
<path d="M7.4 6.4 L1.87 11.87 L0.3 10.3 L0.3 15.7 L5.7 15.7 L4.13 14.13 L9.6 8.6 Z" fill="#3a95e4" stroke="#1c6ab8" stroke-width=".6"/>
<path d="M8.6 6.4 L14.13 11.87 L15.7 10.3 L15.7 15.7 L10.3 15.7 L11.87 14.13 L6.4 8.6 Z" fill="#e2491e" stroke="#b03010" stroke-width=".6"/>
<path d="M6.6 9.2 L2.6 13.2" stroke="#b5dcfa" stroke-width=".8" stroke-dasharray="1 1"/><path d="M9.4 9.2 L13.4 13.2" stroke="#f7b9a4" stroke-width=".8" stroke-dasharray="1 1"/>
<path d="M8 0.3 L12 4.6 L9.8 4.6 L9.8 9.2 L8 11 L6.2 9.2 L6.2 4.6 L4 4.6 Z" fill="#93cc08" stroke="#3f8a00" stroke-width=".7"/>
<path d="M8 1.6 L8 9.6" stroke="#c9ee55" stroke-width="1.1" opacity=".9"/>
</svg>
<span class="t" style="left:924.4px;top:364.00px;font-size:11px;letter-spacing:0.28px;color:#000;">A</span>
<svg fill="none" class="i" style="left:982px;top:361px" width="16" height="16" viewBox="0 0 16 16" stroke-linejoin="round">
<path d="M7.4 6.4 L1.87 11.87 L0.3 10.3 L0.3 15.7 L5.7 15.7 L4.13 14.13 L9.6 8.6 Z" fill="#3a95e4" stroke="#1c6ab8" stroke-width=".6"/>
<path d="M8.6 6.4 L14.13 11.87 L15.7 10.3 L15.7 15.7 L10.3 15.7 L11.87 14.13 L6.4 8.6 Z" fill="#e2491e" stroke="#b03010" stroke-width=".6"/>
<path d="M6.6 9.2 L2.6 13.2" stroke="#b5dcfa" stroke-width=".8" stroke-dasharray="1 1"/><path d="M9.4 9.2 L13.4 13.2" stroke="#f7b9a4" stroke-width=".8" stroke-dasharray="1 1"/>
<path d="M8 0.3 L12 4.6 L9.8 4.6 L9.8 9.2 L8 11 L6.2 9.2 L6.2 4.6 L4 4.6 Z" fill="#93cc08" stroke="#3f8a00" stroke-width=".7"/>
<path d="M8 1.6 L8 9.6" stroke="#c9ee55" stroke-width="1.1" opacity=".9"/>
</svg>
<svg fill="none" class="i" style="left:902.8px;top:380px" width="16" height="16" viewBox="0 0 16 16" stroke-linejoin="round">
<path d="M7.4 6.4 L1.87 11.87 L0.3 10.3 L0.3 15.7 L5.7 15.7 L4.13 14.13 L9.6 8.6 Z" fill="#3a95e4" stroke="#1c6ab8" stroke-width=".6"/>
<path d="M8.6 6.4 L14.13 11.87 L15.7 10.3 L15.7 15.7 L10.3 15.7 L11.87 14.13 L6.4 8.6 Z" fill="#e2491e" stroke="#b03010" stroke-width=".6"/>
<path d="M6.6 9.2 L2.6 13.2" stroke="#b5dcfa" stroke-width=".8" stroke-dasharray="1 1"/><path d="M9.4 9.2 L13.4 13.2" stroke="#f7b9a4" stroke-width=".8" stroke-dasharray="1 1"/>
<path d="M8 0.3 L12 4.6 L9.8 4.6 L9.8 9.2 L8 11 L6.2 9.2 L6.2 4.6 L4 4.6 Z" fill="#93cc08" stroke="#3f8a00" stroke-width=".7"/>
<path d="M8 1.6 L8 9.6" stroke="#c9ee55" stroke-width="1.1" opacity=".9"/>
</svg>
<span class="t" style="left:924.4px;top:383.00px;font-size:11px;letter-spacing:0.28px;color:#000;">B</span>
<div class="node grey" style="left:757px;top:386px;width:94px;height:133px"><div class="hd" style="height:44px"></div><div class="bd" style="top:44px;height:82px"></div><div class="ft"></div></div>
<svg fill="none" class="i" style="left:763px;top:392px" width="30" height="32.28" viewBox="-0.5 -0.5 30 32.2" preserveAspectRatio="none" stroke-linejoin="round">
<path d="M10.6 15.9 L2.4 24.1 L0 22.1 L0 31.2 L9 31.2 L7 28.8 L14.5 21.3 Z" fill="#3a95e4" stroke="#1c6ab8" stroke-width="1"/>
<path d="M18.4 15.9 L26.6 24.1 L29 22.1 L29 31.2 L20 31.2 L22 28.8 L14.5 21.3 Z" fill="#e2491e" stroke="#b03010" stroke-width="1"/>
<path d="M11.2 16.4 L3.6 24" stroke="#9fd0f8" stroke-width="1" opacity=".8"/><path d="M17.8 16.4 L25.4 24" stroke="#f6a58a" stroke-width="1" opacity=".7"/>
<path d="M14.5 0 L21.5 7 L18 7 L18 16.8 L14.5 20.3 L11 16.8 L11 7 L7.5 7 Z" fill="#97cc06" stroke="#4a8a00" stroke-width="1"/>
<path d="M14.5 1.6 L14.5 18.5" stroke="#c6ea4a" stroke-width="1.6" opacity=".9"/>
</svg>
<span class="t" style="left:800.3px;top:392.00px;font-size:10px;letter-spacing:0.197px;color:#000;">Vector3</span>
<span class="t" style="left:800.3px;top:408.00px;font-size:12px;letter-spacing:0.444px;color:#000;">new</span>
<svg fill="none" class="i" style="left:763px;top:435px" width="14.4" height="13" viewBox="0 0 14.4 13">
<defs><linearGradient id="fg4" x1="0" y1="0" x2="0" y2="1"><stop offset="0" stop-color="#b2ea26"/><stop offset="1" stop-color="#7cc400"/></linearGradient></defs>
<path d="M0.6 3.2 L7.4 3.2 L7.4 0.7 L13.8 6.5 L7.4 12.3 L7.4 9.8 L0.6 9.8 Z" fill="url(#fg4)" stroke="#3f8a00" stroke-width="1.1" stroke-linejoin="round"/>
<path d="M1.6 4.3 L8.3 4.3 L8.3 2.8" stroke="#dcf47a" stroke-width="0.9" opacity=".85"/>
</svg>
<svg fill="none" class="i" style="left:831px;top:435px" width="14.4" height="13" viewBox="0 0 14.4 13">
<defs><linearGradient id="fg5" x1="0" y1="0" x2="0" y2="1"><stop offset="0" stop-color="#b2ea26"/><stop offset="1" stop-color="#7cc400"/></linearGradient></defs>
<path d="M0.6 3.2 L7.4 3.2 L7.4 0.7 L13.8 6.5 L7.4 12.3 L7.4 9.8 L0.6 9.8 Z" fill="url(#fg5)" stroke="#3f8a00" stroke-width="1.1" stroke-linejoin="round"/>
<path d="M1.6 4.3 L8.3 4.3 L8.3 2.8" stroke="#dcf47a" stroke-width="0.9" opacity=".85"/>
</svg>
<div class="i" style="left:763.0px;top:454.3px;width:14px;height:14px;border-radius:50%;box-sizing:border-box;border:1px solid #1763b0;background:radial-gradient(circle at 50% 30%, #62bbf8 0%, #1f86dc 75%)"></div>
<span class="t" style="left:783.8px;top:455.00px;font-size:11px;letter-spacing:0.28px;color:#000;">x</span>
<svg fill="none" class="i" style="left:830px;top:452.5px" width="16" height="16" viewBox="0 0 16 16" stroke-linejoin="round">
<path d="M7.4 6.4 L1.87 11.87 L0.3 10.3 L0.3 15.7 L5.7 15.7 L4.13 14.13 L9.6 8.6 Z" fill="#3a95e4" stroke="#1c6ab8" stroke-width=".6"/>
<path d="M8.6 6.4 L14.13 11.87 L15.7 10.3 L15.7 15.7 L10.3 15.7 L11.87 14.13 L6.4 8.6 Z" fill="#e2491e" stroke="#b03010" stroke-width=".6"/>
<path d="M6.6 9.2 L2.6 13.2" stroke="#b5dcfa" stroke-width=".8" stroke-dasharray="1 1"/><path d="M9.4 9.2 L13.4 13.2" stroke="#f7b9a4" stroke-width=".8" stroke-dasharray="1 1"/>
<path d="M8 0.3 L12 4.6 L9.8 4.6 L9.8 9.2 L8 11 L6.2 9.2 L6.2 4.6 L4 4.6 Z" fill="#93cc08" stroke="#3f8a00" stroke-width=".7"/>
<path d="M8 1.6 L8 9.6" stroke="#c9ee55" stroke-width="1.1" opacity=".9"/>
</svg>
<div class="i" style="left:763.0px;top:473.6px;width:14px;height:14px;border-radius:50%;box-sizing:border-box;border:1px solid #1763b0;background:radial-gradient(circle at 50% 30%, #62bbf8 0%, #1f86dc 75%)"></div>
<span class="t" style="left:783.8px;top:475.00px;font-size:11px;letter-spacing:0.28px;color:#000;">y</span>
<div class="fld" style="left:795px;top:473.3px;width:15.5px;height:15.5px"></div><span class="t" style="left:798.5px;top:475.00px;font-size:11px;letter-spacing:0.28px;color:#000;">0</span>
<div class="i" style="left:763.0px;top:492.8px;width:14px;height:14px;border-radius:50%;box-sizing:border-box;border:1px solid #1763b0;background:radial-gradient(circle at 50% 30%, #62bbf8 0%, #1f86dc 75%)"></div>
<span class="t" style="left:783.8px;top:494.00px;font-size:11px;letter-spacing:0.28px;color:#000;">z</span>
<div class="fld" style="left:794px;top:492.3px;width:15.5px;height:15.5px"></div><span class="t" style="left:797.5px;top:494.00px;font-size:11px;letter-spacing:0.28px;color:#000;">0</span>
<div class="node grey" style="left:601px;top:454px;width:101px;height:95px"><div class="hd" style="height:44px"></div><div class="bd" style="top:44px;height:44px"></div><div class="ft"></div></div>
<svg fill="none" class="i" style="left:608px;top:461px" width="28" height="28" viewBox="0 0 28 28">
<defs><linearGradient id="cg622" x1="0" y1="0" x2="0" y2="1"><stop offset="0" stop-color="#eef8ff"/><stop offset="1" stop-color="#c4e0f8"/></linearGradient></defs>
<circle cx="14" cy="14" r="13.3" fill="url(#cg622)" stroke="#3a7cc2" stroke-width="1.3"/><text x="14" y="23.2" text-anchor="middle" font-family="DejaVu Sans, sans-serif" font-weight="bold" font-size="26" fill="#2f74c0">×</text></svg>
<span class="t" style="left:644.3px;top:469.00px;font-size:12px;letter-spacing:-0.199px;color:#000;">Multiply</span>
<div class="i" style="left:607.0px;top:503.0px;width:14px;height:14px;border-radius:50%;box-sizing:border-box;border:1px solid #4f8a00;background:radial-gradient(circle at 50% 30%, #8fd11f 0%, #68a800 75%)"></div>
<span class="t" style="left:627.6px;top:504.00px;font-size:11px;letter-spacing:0.28px;color:#000;">A</span>
<span class="t" style="left:643.4px;top:504.00px;font-size:11px;letter-spacing:0.3px;color:#000;">A × B</span>
<div class="i" style="left:682.0px;top:503.0px;width:14px;height:14px;border-radius:50%;box-sizing:border-box;border:1px solid #4f8a00;background:radial-gradient(circle at 50% 30%, #8fd11f 0%, #68a800 75%)"></div>
<div class="i" style="left:607.0px;top:522.0px;width:14px;height:14px;border-radius:50%;box-sizing:border-box;border:1px solid #4f8a00;background:radial-gradient(circle at 50% 30%, #8fd11f 0%, #68a800 75%)"></div>
<span class="t" style="left:627.6px;top:523.00px;font-size:11px;letter-spacing:0.28px;color:#000;">B</span>
<div class="node grey" style="left:377px;top:406px;width:149px;height:76px"><div class="hd" style="height:44px"></div><div class="bd" style="top:44px;height:25px"></div><div class="ft"></div></div>
<svg fill="none" class="i" style="left:384.1px;top:411.8px" width="29" height="29" viewBox="0 0 29 29">
<defs><radialGradient id="clk" cx=".5" cy=".35" r=".7"><stop offset="0" stop-color="#f8ecb8"/><stop offset="1" stop-color="#fffce6"/></radialGradient></defs>
<circle cx="14.5" cy="14.5" r="14.5" fill="#2a78d0"/><circle cx="14.5" cy="14.5" r="13.5" fill="#62aef4"/><circle cx="14.5" cy="14.5" r="11.8" fill="url(#clk)" stroke="#2a78d0" stroke-width=".7"/>
<path d="M14.50 6.30 L14.50 4.10" stroke="#4a4430" stroke-width="1"/><path d="M19.15 6.45 L19.70 5.49" stroke="#4a4430" stroke-width="1.1"/><path d="M22.55 9.85 L23.51 9.30" stroke="#4a4430" stroke-width="1.1"/><path d="M22.70 14.50 L24.90 14.50" stroke="#4a4430" stroke-width="1"/><path d="M22.55 19.15 L23.51 19.70" stroke="#4a4430" stroke-width="1.1"/><path d="M19.15 22.55 L19.70 23.51" stroke="#4a4430" stroke-width="1.1"/><path d="M14.50 22.70 L14.50 24.90" stroke="#4a4430" stroke-width="1"/><path d="M9.85 22.55 L9.30 23.51" stroke="#4a4430" stroke-width="1.1"/><path d="M6.45 19.15 L5.49 19.70" stroke="#4a4430" stroke-width="1.1"/><path d="M6.30 14.50 L4.10 14.50" stroke="#4a4430" stroke-width="1"/><path d="M6.45 9.85 L5.49 9.30" stroke="#4a4430" stroke-width="1.1"/><path d="M9.85 6.45 L9.30 5.49" stroke="#4a4430" stroke-width="1.1"/><path d="M8.6 7.2 L15.4 14 L11.5 17.5" fill="none" stroke="#2c2c38" stroke-width="1.7" stroke-linecap="round" stroke-linejoin="round"/></svg>
<span class="t" style="left:420.4px;top:412.00px;font-size:10px;letter-spacing:0.706px;color:#000;">Time</span>
<span class="t" style="left:420.4px;top:428.00px;font-size:12px;letter-spacing:0.142px;color:#000;">deltaTime (get)</span>
<div class="i" style="left:506.0px;top:455.0px;width:14px;height:14px;border-radius:50%;box-sizing:border-box;border:1px solid #1763b0;background:radial-gradient(circle at 50% 30%, #62bbf8 0%, #1f86dc 75%)"></div>
<div class="node teal" style="left:398px;top:516px;width:130px;height:98px"><div class="hd" style="height:47px"></div><div class="bd" style="top:47px;height:44px"></div><div class="ft"></div></div>
<svg fill="none" class="i" style="left:404.2px;top:523.3px" width="30" height="30" viewBox="0 0 30 30" stroke-linejoin="round" stroke-linecap="round" fill="none">
<path d="M9.8 3.4 L2.3 10 L9.8 16.6" stroke="#1f6ab8" stroke-width="4.4"/><path d="M9.8 3.4 L2.3 10 L9.8 16.6" stroke="#4a9be6" stroke-width="2.8"/><path d="M9.6 3.6 L2.8 9.6" stroke="#a8d6fa" stroke-width="1" opacity=".9"/>
<path d="M20.2 3.4 L27.7 10 L20.2 16.6" stroke="#1f6ab8" stroke-width="4.4"/><path d="M20.2 3.4 L27.7 10 L20.2 16.6" stroke="#4a9be6" stroke-width="2.8"/><path d="M20.4 3.6 L27.2 9.6" stroke="#a8d6fa" stroke-width="1" opacity=".9"/>
<path d="M14.5 17 L22 14.3 L30 16.8 L22.5 20 Z" fill="#b5d43a"/><path d="M14.5 17 L22.5 20 L22.5 29 L15.2 25.5 Z" fill="#4f9fe2"/><path d="M22.5 20 L30 16.8 L29.3 25.3 L22.5 29 Z" fill="#ee4d18"/></svg>
<span class="t" style="left:441.6px;top:523.00px;font-size:12px;letter-spacing:0.089px;color:#000;">Get Variable</span>
<div class="a" style="left:441.5px;top:539.5px;width:52px;height:14px;box-sizing:border-box;border:1px solid #7d7d7d;border-radius:3px;background:linear-gradient(#fdfdfd,#d6d6d6)"></div>
<span class="t" style="left:447.5px;top:540.00px;font-size:9px;letter-spacing:0.5px;color:#111;-webkit-text-stroke:.25px #111;">Object</span>
<svg fill="none" class="i" style="left:484.5px;top:543px" width="4" height="8" viewBox="0 0 5 9"><path d="M2.5 0 L5 3.4 L0 3.4Z M0 5.6 L5 5.6 L2.5 9Z" fill="#222"/></svg>
<div class="i" style="left:404.0px;top:568.5px;width:14px;height:14px;border-radius:50%;box-sizing:border-box;border:1px solid #e07416;background:radial-gradient(circle at 50% 30%, #ffb066 0%, #ff8a2a 75%)"></div>
<div class="fld" style="left:424px;top:568px;width:75px;height:15.5px"></div><span class="t" style="left:427.5px;top:569.00px;font-size:11px;letter-spacing:0.28px;color:#000;">Speed</span>
<div class="a" style="left:486.5px;top:569px;width:11.5px;height:13.5px;box-sizing:border-box;border-left:1px solid #9a9a9a;background:linear-gradient(#eee,#cfcfcf)"></div>
<svg fill="none" class="i" style="left:489.5px;top:574px" width="6" height="4" viewBox="0 0 6 4"><path d="M0 0 L6 0 L3 4Z" fill="#444"/></svg>
<div class="i" style="left:508.0px;top:568.3px;width:14px;height:14px;border-radius:50%;box-sizing:border-box;border:1px solid #4f8a00;background:radial-gradient(circle at 50% 30%, #8fd11f 0%, #68a800 75%)"></div>
<svg fill="none" class="i" style="left:404px;top:587.0px" width="14" height="15" viewBox="0 0 14 15">
<path d="M7 .6 L13.4 3.6 L7 6.8 L.6 3.6 Z" fill="#f4f4f4"/><path d="M.6 3.6 L7 6.8 L7 14.4 L.6 11 Z" fill="#d0d0d0"/><path d="M7 6.8 L13.4 3.6 L13.4 11 L7 14.4 Z" fill="#b4b4b4"/></svg>
<div class="fld" style="left:424px;top:587px;width:57px;height:15.5px"></div><span class="t" style="left:427.5px;top:588.00px;font-size:11px;letter-spacing:0.28px;color:#000;">Self</span>
<svg fill="none" class="i" style="left:487.5px;top:589.5px" width="10" height="10" viewBox="0 0 10 10"><circle cx="5" cy="5" r="3" fill="none" stroke="#222" stroke-width="1"/><circle cx="5" cy="5" r="0.9" fill="#222"/></svg>
</body></html>
